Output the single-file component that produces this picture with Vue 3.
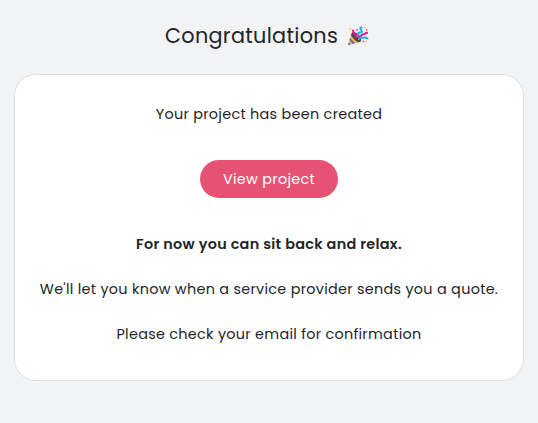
<script setup>
const notes = [
  "We'll let you know when a service provider sends you a quote.",
  'Please check your email for confirmation',
]
</script>

<template>
  <main class="page">
    <h1 class="title">
      <span>Congratulations</span>
      <svg class="popper" viewBox="0 0 22 20" aria-hidden="true">
        <path d="M4.6 7 1 19.3 14 15.6Z" fill="#fbb93d" />
        <path d="M4.4 7.7 3.9 9.5 10.7 16.5 13 15.9ZM3.1 12 2.5 14 5.8 17.9 8 17.2ZM1.8 16.5 1 19.3 3.9 18.5Z" fill="#5b62d0" />
        <ellipse cx="9.3" cy="11" rx="3.1" ry="6.2" transform="rotate(-44 9.3 11)" fill="#59413f" />
        <g fill="none" stroke-linecap="round" stroke-width="2.1">
          <path d="M9.4 10.8C9.2 7.8 5.3 8 6.1 4.6" stroke="#ed168f" />
          <path d="M10.8 10.3C11.7 8.3 10.3 7 12.4 6.5S15.4 6.7 14.5 4.6 12.5 2.8 14.5 1.4" stroke="#22aee9" />
          <path d="M12 10.6C14.5 10.6 14 8.4 16.4 8.3S18.2 6.6 20 6.9" stroke="#ed168f" />
          <path d="M11.8 13C14 10.4 15.1 12.2 16.8 11.7S19.4 11 20.5 12.5" stroke="#22aee9" />
        </g>
        <g fill="#ed168f">
          <rect x="9.3" y="3" width="1.5" height="1.5" />
          <rect x="19" y="3.2" width="1.4" height="1.4" />
          <rect x="15.7" y="14.7" width="1.5" height="1.4" />
        </g>
        <g fill="#f9b934">
          <rect x="2.6" y="2.2" width="1.5" height="1.5" />
          <rect x="17.3" y="1" width="1.4" height="1.4" />
          <rect x="18.5" y="14.7" width="1.4" height="1.4" />
        </g>
      </svg>
    </h1>
    <section class="card">
      <p>Your project has been created</p>
      <button class="button" type="button">View project</button>
      <p class="relax">For now you can sit back and relax.</p>
      <p v-for="(note, i) in notes" :key="i">{{ note }}</p>
    </section>
  </main>
</template>

<style>
body {
  background: #f1f3f5;
}
</style>

<style scoped>
.page {
  box-sizing: border-box;
  height: 423px;
  padding: 17px 14px 42px;
  background: #f1f3f5;
  color: #212529;
  font-family: Poppins, "Open Sans", sans-serif;
  font-size: 14.4px;
  letter-spacing: 0.288px;
  text-align: center;
}
.title {
  display: flex;
  align-items: center;
  justify-content: center;
  height: 36px;
  margin: 0 0 21px;
  padding-right: 4px;
  gap: 9px;
  font-size: 20.8px;
  font-weight: 400;
  white-space: nowrap;
}
.popper {
  width: 22px;
  height: 20px;
  margin-top: 2px;
}
.card {
  box-sizing: border-box;
  height: 307px;
  padding: 27px 20px 0;
  border: 1px solid #dedfe1;
  border-radius: 22px;
  background: #fff;
}
.card p {
  margin: 0 0 21px;
  line-height: 24px;
  white-space: nowrap;
}
.button {
  display: block;
  width: 138px;
  height: 38px;
  margin: 34px auto;
  padding: 0;
  border: 0;
  border-radius: 19px;
  background: #e55273;
  color: #fff;
  font: inherit;
  letter-spacing: inherit;
}
.card .relax {
  font-weight: 600;
}
</style>
